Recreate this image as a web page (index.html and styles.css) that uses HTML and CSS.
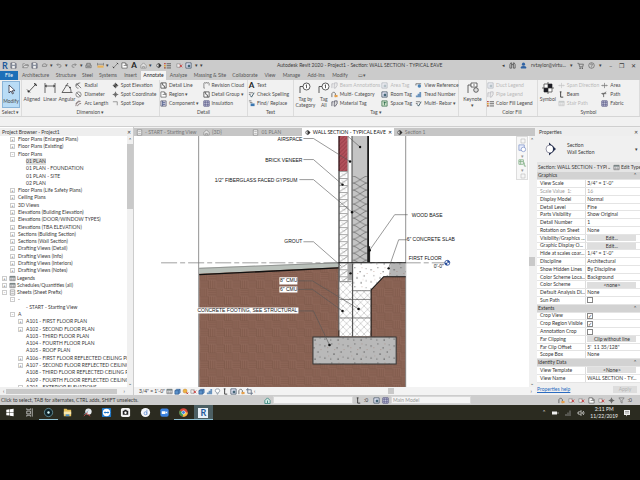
FILE: index.html
```
<!DOCTYPE html>
<html lang="en">
<head>
<meta charset="utf-8">
<title>Autodesk Revit 2020 - Project1</title>
<link rel="stylesheet" href="styles.css">
</head>
<body>
<svg class="sprite" aria-hidden="true">
  <symbol id="i-open" viewBox="0 0 8 8"><path d="M1 6.500V2h2l1 1h3v1M1 6.500 2.500 4h5L6 6.500z" fill="#ddd" stroke="#666" stroke-width=".6"/></symbol>
  <symbol id="i-save" viewBox="0 0 8 8"><path d="M1 1h5l1 1v5H1z" fill="#8d96a3" stroke="#556" stroke-width=".7"/><path d="M2.500 1h3v2h-3zM2.500 4.500h3V7h-3z" fill="#eee"/></symbol>
  <symbol id="i-page" viewBox="0 0 8 8"><path d="M1.500 1h5v6h-5z" fill="#fff" stroke="#777" stroke-width=".7"/><path d="M2.500 3h3M2.500 5h3" stroke="#777" stroke-width=".6"/></symbol>
  <symbol id="i-sync" viewBox="0 0 8 8"><path d="M1.500 5a2.500 2.500 0 0 1 5-1M6.500 4l-1-.7M6.500 4l.8-1M1.500 5h5" fill="none" stroke="#777" stroke-width=".8"/></symbol>
  <symbol id="i-undo" viewBox="0 0 8 8"><path d="M1 3h4a2 2 0 0 1 0 3H3M2.500 1.500 1 3l1.500 1.500" fill="none" stroke="#777" stroke-width=".8"/></symbol>
  <symbol id="i-print" viewBox="0 0 8 8"><path d="M1 3.500h6v3H1z" fill="#ccc" stroke="#555" stroke-width=".7"/><path d="M2 3.500v-2h4v2M2 5h4" fill="none" stroke="#555" stroke-width=".7"/></symbol>
  <symbol id="i-measure" viewBox="0 0 8 8"><path d="M.5 4h7v2.500h-7z" fill="#e8b25a"/><path d="M.5 2.500h7M.5 1v3M7.500 1v3" stroke="#666" stroke-width=".7"/></symbol>
  <symbol id="i-align" viewBox="0 0 12 12"><path d="M2.500 10 9.500 2.500M1 7.500l3 3M8 1l3 3" fill="none" stroke="#444" stroke-width=".9"/><circle cx="2.500" cy="9.500" r="1" fill="#333"/><circle cx="9.500" cy="2.500" r="1" fill="#333"/></symbol>
  <symbol id="i-linear" viewBox="0 0 12 12"><path d="M1 1v10M11 1v10M1 4h10M3 3 1 4l2 1M9 3l2 1-2 1" fill="none" stroke="#444" stroke-width=".8"/></symbol>
  <symbol id="i-angular" viewBox="0 0 12 12"><path d="M1 10.500h10.500M1 10.500 7 1M4.500 3.500C8 3 10 6 10 10" fill="none" stroke="#444" stroke-width=".8"/><circle cx="9" cy="5.500" r=".8" fill="#333"/></symbol>
  <symbol id="i-radial" viewBox="0 0 8 8"><path d="M1.500 2C0 5 2 7.500 4 7M2 2l5 5M2 2h2.500M2 2v2.500M3.500 1.500 6 1" fill="none" stroke="#555" stroke-width=".8"/></symbol>
  <symbol id="i-diam" viewBox="0 0 8 8"><circle cx="4" cy="4" r="3" fill="none" stroke="#555" stroke-width=".7"/><path d="m2 2 4 4" stroke="#555" stroke-width=".8"/></symbol>
  <symbol id="i-arc" viewBox="0 0 8 8"><path d="M1 7c0-3 2-5 5.500-5.500M1 4.500C2 2.500 3 1.500 5 1M3 7c0-2 2-3 4-3" fill="none" stroke="#655" stroke-width=".8"/></symbol>
  <symbol id="i-spot" viewBox="0 0 8 8"><circle cx="4" cy="4" r="2" fill="#eee" stroke="#222" stroke-width=".7"/><path d="M4 2a2 2 0 0 1 2 2H4zM4 6a2 2 0 0 1-2-2h2z" fill="#222"/><path d="M4 .8v6.400M.8 4h6.400" stroke="#444" stroke-width=".6"/></symbol>
  <symbol id="i-coord" viewBox="0 0 8 8"><circle cx="4" cy="4" r="1.700" fill="none" stroke="#555" stroke-width=".8"/><path d="M4 .8v6.400M.8 4h6.400" stroke="#555" stroke-width=".8"/></symbol>
  <symbol id="i-slope" viewBox="0 0 8 8"><path d="M1 2h5v4" fill="none" stroke="#777" stroke-width=".8"/></symbol>
  <symbol id="i-detail" viewBox="0 0 8 8"><path d="M1 1h6v6H1z" fill="#fff" stroke="#444" stroke-width=".9"/><path d="m2 1.500 4 5M3 1v3M5 4v3" stroke="#444" stroke-width=".7"/></symbol>
  <symbol id="i-region" viewBox="0 0 8 8"><path d="M1 1h4l2 2v4H1z" fill="#fff" stroke="#555" stroke-width=".8"/><path d="M3 4h4M5 1v2h2" fill="none" stroke="#555" stroke-width=".7"/></symbol>
  <symbol id="i-comp" viewBox="0 0 8 8"><path d="M1 1h6v6H1z" fill="#dde" stroke="#556" stroke-width=".8"/><path d="M3 1v6M3 3h3M3 5h3" stroke="#347" stroke-width=".8"/></symbol>
  <symbol id="i-cloud" viewBox="0 0 8 8"><path d="M2 7H1V2a1 1 0 0 1 2-.5 1 1 0 0 1 2 0 1 1 0 0 1 2 .5v2" fill="none" stroke="#666" stroke-width=".8"/></symbol>
  <symbol id="i-spell" viewBox="0 0 8 8"><path d="M1 2h5M1 4h2" stroke="#555" stroke-width=".8"/><path d="m2.500 5 1.500 2 3-5" fill="none" stroke="#356" stroke-width="1"/></symbol>
  <symbol id="i-find" viewBox="0 0 8 8"><path d="M1 1h3M2 3h3" stroke="#555" stroke-width=".8"/><path d="M3 4h4.500v3H3z" fill="#3a77b0"/></symbol>
  <symbol id="i-tag" viewBox="0 0 12 12"><circle cx="7.500" cy="4.500" r="3.500" fill="#fff" stroke="#333" stroke-width=".8"/><path d="M1 11V4.500h3M7.500 2.800v3.400M6.800 3.300l.7-.5" fill="none" stroke="#333" stroke-width=".8"/></symbol>
  <symbol id="i-multi" viewBox="0 0 8 8"><path d="M1 7V3l2-2 2 2v4" fill="none" stroke="#444" stroke-width=".8"/><path d="M4 4.500h3.500V7H4z" fill="#e6a04b"/></symbol>
  <symbol id="i-mat" viewBox="0 0 8 8"><path d="M1 7V2h2M4 1h3v3L5 7H3.500z" fill="#ddd" stroke="#445" stroke-width=".8"/></symbol>
  <symbol id="i-room" viewBox="0 0 8 8"><path d="M1 1h6v6H1z" fill="#eef" stroke="#456" stroke-width=".9"/><path d="M3 3h3v3H3z" fill="#467"/></symbol>
  <symbol id="i-space" viewBox="0 0 8 8"><path d="M1 1h6v6H1z" fill="#cfe3cc" stroke="#475" stroke-width=".9"/><path d="M4 2v4M3 3h3" stroke="#264" stroke-width=".8"/></symbol>
  <symbol id="i-view" viewBox="0 0 8 8"><path d="M1 2h6M1 2v2" stroke="#555" stroke-width=".8"/><circle cx="5" cy="4.500" r="2" fill="#4d83b5"/></symbol>
  <symbol id="i-tread" viewBox="0 0 8 8"><path d="M1 7V5h2V3h2V1h2v6z" fill="#6a93bd"/></symbol>
  <symbol id="i-key" viewBox="0 0 12 12"><path d="M1 11V3h3" fill="none" stroke="#444" stroke-width=".8"/><path d="M4 1h6v4H4z" fill="#fff" stroke="#444" stroke-width=".8"/><circle cx="9" cy="8" r="2.300" fill="#ddd" stroke="#444" stroke-width=".8"/><path d="M7 2v2" stroke="#444" stroke-width=".7"/></symbol>
  <symbol id="i-legend" viewBox="0 0 8 8"><path d="M0 1h2v1.500H0z" fill="#c0504d"/><path d="M0 3.500h2V5H0z" fill="#e0a030"/><path d="M0 6h2v1.500H0z" fill="#a05030"/><path d="M3 2h5M3 4.300h5M3 6.800h5" stroke="#444" stroke-width=".9"/></symbol>
  <symbol id="i-symbol" viewBox="0 0 12 12"><path d="M2 2h8v8H2z" fill="#fff" stroke="#333" stroke-width=".7"/><path d="M6 2h4v4H6zM2 6h4v4H2z" fill="#1c1c24"/><path d="M6 0v12M0 6h12" stroke="#333" stroke-width=".7"/></symbol>
  <symbol id="i-span" viewBox="0 0 8 8"><path d="M1 4h6M4 1v6M2 3 1 4l1 1M6 3l1 1-1 1" fill="none" stroke="#777" stroke-width=".8"/></symbol>
  <symbol id="i-beam" viewBox="0 0 8 8"><path d="M3 1v6h3M2 1h2" fill="none" stroke="#333" stroke-width="1"/></symbol>
  <symbol id="i-path" viewBox="0 0 8 8"><path d="M1 3h5M6 1 3 3v4M2 2 1 3l1 1" fill="none" stroke="#555" stroke-width=".9"/></symbol>
  <symbol id="i-fabric" viewBox="0 0 8 8"><path d="M1 1h6v6H1z" fill="#e8eaf6" stroke="#447" stroke-width=".9"/><path d="M3 1v6M5 1v6M1 3h6M1 5h6" stroke="#447" stroke-width=".6"/></symbol>
  <symbol id="i-user" viewBox="0 0 8 8"><circle cx="4" cy="2.500" r="1.800" fill="#2f62a3"/><path d="M1 7.500V6q0-1.500 3-1.500T7 6v1.500z" fill="#2f62a3"/></symbol>
  <symbol id="i-cart" viewBox="0 0 8 8"><path d="M.5 1.500H2L3 5.500h3.500l.8-3H2.200" fill="none" stroke="#555" stroke-width=".8"/><circle cx="3.500" cy="7" r=".6"/><circle cx="6" cy="7" r=".6"/></symbol>
  <symbol id="i-help" viewBox="0 0 8 8"><circle cx="4" cy="4" r="3.200" fill="none" stroke="#555" stroke-width=".7"/><path d="M3 3.200q0-1 1-1t1 1T4 4.500v.4M4 5.500v.6" fill="none" stroke="#555" stroke-width=".7"/></symbol>
  <symbol id="i-bino" viewBox="0 0 8 8"><path d="M1 7V3l1-2h1v6zM7 7V3L6 1H5v6zM3 3h2" fill="none" stroke="#444" stroke-width=".8"/></symbol>
  <symbol id="i-cube" viewBox="0 0 8 8"><path d="m1 3 2-1.500h4V5.500L5 7H1z" fill="#5d93cb" stroke="#2a558a" stroke-width=".7"/><path d="M1 3h4v4M5 3l2-1.500" fill="none" stroke="#2a558a" stroke-width=".6"/></symbol>
  <symbol id="i-grid" viewBox="0 0 8 8"><path d="M1 1.500h6v5H1z" fill="#e7e7ea" stroke="#666" stroke-width=".7"/><path d="M1 1.500h6v1.400H1z" fill="#677"/><path d="M3 3v3.500M5 3v3.500M1 5h6" stroke="#888" stroke-width=".5"/></symbol>
  <symbol id="i-sun" viewBox="0 0 8 8"><circle cx="3.500" cy="3.500" r="2.300" fill="#f0b340" stroke="#b87a20" stroke-width=".5"/><path d="m5 5 2 2M7 5 5 7" stroke="#c0392b" stroke-width="1"/></symbol>
  <symbol id="i-crop" viewBox="0 0 8 8"><path d="M2 0v6h6M0 2h6v6" fill="none" stroke="#5a6a80" stroke-width=".9"/></symbol>
  <symbol id="i-filter" viewBox="0 0 8 8"><path d="M1 1h6L4.700 4v3l-1.400-1V4z" fill="none" stroke="#777" stroke-width=".8"/></symbol>
  <symbol id="i-bulb" viewBox="0 0 8 8"><path d="M4 1a2 2 0 0 0-1 4v1h2V5a2 2 0 0 0-1-4M3.300 7h1.400" fill="#fff" stroke="#678" stroke-width=".7"/></symbol>
  <symbol id="i-home" viewBox="0 0 8 8"><path d="M1 4 4 1l3 3v3.500H1z" fill="#d8eee8" stroke="#2d8077" stroke-width=".9"/><path d="M4 4v3" stroke="#2d8077"/></symbol>
  <symbol id="i-house" viewBox="0 0 8 8"><path d="M1 4 4 1l3 3v3H1zM3 7V5h2v2" fill="#e4e4e4" stroke="#888" stroke-width=".8"/></symbol>
  <symbol id="i-pin" viewBox="0 0 8 8"><path d="M1 2h4v4H1z" fill="#eee" stroke="#777" stroke-width=".6"/><path d="m4 3 3 3M7 3 4 6" stroke="#c33" stroke-width="1"/></symbol>
  <symbol id="i-section" viewBox="0 0 8 8"><circle cx="4" cy="4" r="2" fill="#fff" stroke="#333" stroke-width=".8"/><path d="M4 1v6l3.500-3z" fill="#333"/></symbol>
</svg>

<div class="app">
  <header class="title">
    <div class="quick">
      <b class="logo">R</b>
      <svg class="ic"><use href="#i-save"/></svg><i></i>
      <svg class="ic"><use href="#i-open"/></svg>
      <svg class="ic"><use href="#i-save"/></svg>
      <svg class="ic"><use href="#i-sync"/></svg><i>▾</i>
      <svg class="ic"><use href="#i-undo"/></svg><i>▾</i>
      <svg class="ic flip"><use href="#i-undo"/></svg><i>▾</i>
      <svg class="ic"><use href="#i-print"/></svg><i></i>
      <svg class="ic"><use href="#i-measure"/></svg><i>▾</i>
      <svg class="ic"><use href="#i-align"/></svg>
      <svg class="ic"><use href="#i-region"/></svg>
      <b class="bigA">A</b>
      <svg class="ic"><use href="#i-house"/></svg><i>▾</i>
      <svg class="ic"><use href="#i-section"/></svg>
      <svg class="ic"><use href="#i-legend"/></svg><i></i>
      <svg class="ic"><use href="#i-pin"/></svg>
      <svg class="ic"><use href="#i-room"/></svg><i>▾</i>
      <i>▾</i>
    </div>
    <h1>Autodesk Revit 2020 - Project1 - Section: WALL SECTION - TYPICAL EAVE</h1>
    <div class="account">
      <i>◂</i>
      <svg class="ic"><use href="#i-bino"/></svg>
      <svg class="ic"><use href="#i-user"/></svg>
      <span>rvtaylor@virtu...</span><i>▾</i>
      <svg class="ic"><use href="#i-cart"/></svg>
      <svg class="ic"><use href="#i-help"/></svg><i>▾</i>
    </div>
    <div class="wins"><button aria-label="Minimize">–</button><button aria-label="Restore">❐</button><button aria-label="Close">✕</button></div>
  </header>

  <nav class="tabs">
    <button class="file">File</button><button>Architecture</button><button>Structure</button><button>Steel</button><button>Systems</button><button>Insert</button><button class="on">Annotate</button><button>Analyze</button><button>Massing &amp; Site</button><button>Collaborate</button><button>View</button><button>Manage</button><button>Add-Ins</button><button>Modify</button><button>▭▾</button>
  </nav>

  <section class="ribbon">
    <div class="panel p-select">
      <div class="tools"><button class="big active"><svg><path d="M4 1v8l2-2 1.500 3 1-.6L7.200 6.700H10z" fill="#fff" stroke="#334" stroke-width=".8"/></svg>Modify</button></div>
      <h2>Select ▾</h2>
    </div>
    <div class="panel p-dim">
      <div class="tools">
        <button class="big"><svg><use href="#i-align"/></svg>Aligned</button>
        <button class="big"><svg><use href="#i-linear"/></svg>Linear</button>
        <button class="big"><svg><use href="#i-angular"/></svg>Angular</button>
        <div class="col">
          <button><svg class="ic"><use href="#i-radial"/></svg>Radial</button>
          <button><svg class="ic"><use href="#i-diam"/></svg>Diameter</button>
          <button><svg class="ic"><use href="#i-arc"/></svg>Arc Length</button>
        </div>
        <div class="col">
          <button><svg class="ic"><use href="#i-spot"/></svg>Spot Elevation</button>
          <button><svg class="ic"><use href="#i-coord"/></svg>Spot Coordinate</button>
          <button><svg class="ic"><use href="#i-slope"/></svg>Spot Slope</button>
        </div>
      </div>
      <h2>Dimension ▾</h2>
    </div>
    <div class="panel p-detail">
      <div class="tools">
        <div class="col">
          <button><svg class="ic"><use href="#i-detail"/></svg>Detail Line</button>
          <button><svg class="ic"><use href="#i-region"/></svg>Region ▾</button>
          <button><svg class="ic"><use href="#i-comp"/></svg>Component ▾</button>
        </div>
        <div class="col">
          <button><svg class="ic"><use href="#i-cloud"/></svg>Revision Cloud</button>
          <button><svg class="ic"><use href="#i-detail"/></svg>Detail Group ▾</button>
          <button><svg class="ic"><use href="#i-fabric"/></svg>Insulation</button>
        </div>
      </div>
      <h2>Detail</h2>
    </div>
    <div class="panel p-text">
      <div class="tools">
        <div class="col">
          <button><b class="bigA">A</b>Text</button>
          <button><svg class="ic"><use href="#i-spell"/></svg>Check Spelling</button>
          <button><svg class="ic"><use href="#i-find"/></svg>Find/ Replace</button>
        </div>
      </div>
      <h2>Text</h2>
    </div>
    <div class="panel p-tag">
      <div class="tools">
        <button class="big"><svg><use href="#i-tag"/></svg>Tag by<br>Category</button>
        <button class="big"><svg><use href="#i-tag"/></svg>Tag<br>All</button>
        <div class="col">
          <button disabled><svg class="ic"><use href="#i-mat"/></svg>Beam Annotations</button>
          <button><svg class="ic"><use href="#i-multi"/></svg>Multi- Category</button>
          <button><svg class="ic"><use href="#i-mat"/></svg>Material Tag</button>
        </div>
        <div class="col">
          <button disabled><svg class="ic"><use href="#i-room"/></svg>Area Tag</button>
          <button><svg class="ic"><use href="#i-room"/></svg>Room Tag</button>
          <button><svg class="ic"><use href="#i-space"/></svg>Space Tag</button>
        </div>
        <div class="col">
          <button><svg class="ic"><use href="#i-view"/></svg>View Reference</button>
          <button><svg class="ic"><use href="#i-tread"/></svg>Tread Number</button>
          <button><svg class="ic"><use href="#i-spell"/></svg>Multi- Rebar ▾</button>
        </div>
      </div>
      <h2>Tag ▾</h2>
    </div>
    <div class="panel p-key">
      <div class="tools"><button class="big"><svg><use href="#i-key"/></svg>Keynote<br>▾</button></div>
      <h2></h2>
    </div>
    <div class="panel p-fill">
      <div class="tools">
        <div class="col">
          <button disabled><svg class="ic"><use href="#i-room"/></svg>Duct Legend</button>
          <button disabled><svg class="ic"><use href="#i-mat"/></svg>Pipe Legend</button>
          <button><svg class="ic"><use href="#i-legend"/></svg>Color Fill Legend</button>
        </div>
      </div>
      <h2>Color Fill</h2>
    </div>
    <div class="panel p-sym">
      <div class="tools">
        <button class="big"><svg><use href="#i-symbol"/></svg>Symbol</button>
        <div class="col">
          <button disabled><svg class="ic"><use href="#i-span"/></svg>Span Direction</button>
          <button><svg class="ic"><use href="#i-beam"/></svg>Beam</button>
          <button disabled><svg class="ic"><use href="#i-grid"/></svg>Stair Path</button>
        </div>
        <div class="col">
          <button><svg class="ic"><use href="#i-span"/></svg>Area</button>
          <button><svg class="ic"><use href="#i-path"/></svg>Path</button>
          <button><svg class="ic"><use href="#i-fabric"/></svg>Fabric</button>
        </div>
      </div>
      <h2>Symbol</h2>
    </div>
  </section>
  <div class="options"></div>

  <main class="work">
    <aside class="browser">
      <div class="cap"><span>Project Browser - Project1</span><button aria-label="Close browser">✕</button></div>
      <div class="scroller">
        <ul class="tree">
          <li class="l1 x">Floor Plans (Enlarged Plans)</li>
          <li class="l1 x">Floor Plans (Existing)</li>
          <li class="l1 o">Floor Plans</li>
          <li class="l2"><span class="sel">01 PLAN</span></li>
          <li class="l2">01 PLAN - FOUNDATION</li>
          <li class="l2">01 PLAN - SITE</li>
          <li class="l2">02 PLAN</li>
          <li class="l1 x">Floor Plans (Life Safety Plans)</li>
          <li class="l1 x">Ceiling Plans</li>
          <li class="l1 x">3D Views</li>
          <li class="l1 x">Elevations (Building Elevation)</li>
          <li class="l1 x">Elevations (DOOR/WINDOW TYPES)</li>
          <li class="l1 x">Elevations (TBA ELEVATION)</li>
          <li class="l1 x">Sections (Building Section)</li>
          <li class="l1 x">Sections (Wall Section)</li>
          <li class="l1 x">Drafting Views (Detail)</li>
          <li class="l1 x">Drafting Views (Info)</li>
          <li class="l1 x">Drafting Views (Interiors)</li>
          <li class="l1 x">Drafting Views (Notes)</li>
          <li class="l0 x"><svg class="ic"><use href="#i-grid"/></svg>Legends</li>
          <li class="l0 x"><svg class="ic"><use href="#i-grid"/></svg>Schedules/Quantities (all)</li>
          <li class="l0 o"><svg class="ic"><use href="#i-page"/></svg>Sheets (Sheet Prefix)</li>
          <li class="l1 o">-</li>
          <li class="l2">- START - Starting View</li>
          <li class="l1 o">A</li>
          <li class="l2 x">A101 - FIRST FLOOR PLAN</li>
          <li class="l2 x">A102 - SECOND FLOOR PLAN</li>
          <li class="l2">A103 - THIRD FLOOR PLAN</li>
          <li class="l2">A104 - FOURTH FLOOR PLAN</li>
          <li class="l2">A105 - ROOF PLAN</li>
          <li class="l2 x">A106 - FIRST FLOOR REFLECTED CEILING PLAN</li>
          <li class="l2 x">A107 - SECOND FLOOR REFLECTED CEILING PLAN</li>
          <li class="l2">A108 - THIRD FLOOR REFLECTED CEILING PLAN</li>
          <li class="l2">A109 - FOURTH FLOOR REFLECTED CEILING PLAN</li>
          <li class="l2 x">A201 - EXTERIOR ELEVATIONS</li>
        </ul>
        <div class="vbar"><span>⌃</span><div class="thumb t-tree"></div><span>⌄</span></div>
      </div>
      <div class="hbar"><span>‹</span><div class="thumb"></div><span>›</span></div>
    </aside>

    <section class="doc">
      <nav class="views">
        <button><svg class="ic"><use href="#i-page"/></svg>- START - Starting View</button>
        <button><svg class="ic"><use href="#i-house"/></svg>{3D}</button>
        <button><svg class="ic"><use href="#i-page"/></svg>01 PLAN</button>
        <button class="on"><svg class="ic"><use href="#i-section"/></svg>WALL SECTION - TYPICAL EAVE<span>✕</span></button>
        <button><svg class="ic"><use href="#i-section"/></svg>Section 1</button>
      </nav>
      <div class="canvas">
        <svg class="drawing" viewBox="134 136 394 251" preserveAspectRatio="xMinYMin slice" role="img" aria-label="Wall section">
          <defs>
            <pattern id="earth" width="16" height="16" patternUnits="userSpaceOnUse">
              <rect width="16" height="16" fill="#90685a"/>
              <path d="M0 .5h8M0 2.500h8M0 4.500h8M0 6.500h8M8 8.500h8M8 10.500h8M8 12.500h8M8 14.500h8M8.500 0v8M10.500 0v8M12.500 0v8M14.500 0v8M.5 8v8M2.500 8v8M4.500 8v8M6.500 8v8" stroke="#6f4b3c" stroke-width=".5"/>
            </pattern>
            <pattern id="brick" width="4" height="4" patternUnits="userSpaceOnUse">
              <rect width="4" height="4" fill="#b0505a"/><path d="m0 4 4-4" stroke="#8c343f" stroke-width=".7"/>
            </pattern>
            <pattern id="course" x="339" y="171" width="9" height="7" patternUnits="userSpaceOnUse">
              <rect width="9" height="7" fill="#fff"/><path d="M0 .5h9M0 6.500l9-6" fill="none" stroke="#666" stroke-width=".6"/><path d="m2 2 4 3" stroke="#aaa" stroke-width=".4"/>
            </pattern>
            <pattern id="batt" x="352" y="176" width="15" height="7" patternUnits="userSpaceOnUse">
              <rect width="15" height="7" fill="#c4c4c4"/><path d="M0 0c5 0 10 7 15 7M15 0C10 0 5 7 0 7" fill="none" stroke="#666" stroke-width=".7"/>
            </pattern>
            <pattern id="cmu" x="339" y="281" width="7" height="7" patternUnits="userSpaceOnUse">
              <rect width="7" height="7" fill="#fff"/><path d="m0 0 7 7M7 0 0 7" stroke="#aaa" stroke-width=".5"/>
            </pattern>
            <pattern id="speck" width="23" height="19" patternUnits="userSpaceOnUse">
              <path d="M2 3h1v1H2zM9 1h.8v.8H9zM14 5h1v1h-1zM5 9h.8v.8H5zM11 11h1v1h-1zM18 9h1v1h-1zM20 2h.7v.7H20zM2 15h1v1H2zM8 16h.8v.8H8zM15 16h1v1h-1zM20 14h.8v.8H20z" fill="#333"/>
              <path d="M5 5h.6v.6H5zM12 7h.6v.6h-.6zM17 13h.6v.6h-.6zM6 13h.6v.6H6zM21 7h.6v.6h-.6zM16 1h.6v.6h-.6z" fill="#965"/>
            </pattern>
          </defs>
          <path d="M199 273 338 266V387H405V276H383L370 290V387H199z" fill="url(#earth)"/>
          <path d="M337 330h40v57h-40z" fill="url(#earth)"/>
          <path d="M199 267.500 338 262v5L199 273.500z" fill="#b9c0ba"/>
          <path d="M199 268 338 262.500" stroke="#777" stroke-width=".6"/>
          <path d="M199 274.300 338 267.500" stroke="#111" stroke-width="1.400"/>
          <path d="M198.500 136V387M405 136V387" stroke="#777" stroke-width=".8"/>
          <path d="M161 262.500H446" stroke="#777" stroke-width=".7" stroke-dasharray="16 3 5 3"/>
          <path d="M338 136h9v35h-9z" fill="url(#brick)"/>
          <path d="M339 171h8v110h-8z" fill="url(#course)"/>
          <path d="M338.500 136V336" stroke="#111" stroke-width="1"/>
          <path d="M347.500 136V281" stroke="#555" stroke-width=".6"/>
          <path d="M352 136h15v40h-15z" fill="#c4c4c4"/>
          <path d="M352 176h15v86h-15z" fill="url(#batt)"/>
          <path d="M351.500 136V262" stroke="#333" stroke-width="1"/>
          <path d="M367.500 136V262" stroke="#000" stroke-width="1.600"/>
          <path d="M347.500 263h4v17h-4z" fill="#aaa"/>
          <path d="M352 263h53v13H383L370 290H352z" fill="#fff"/>
          <path d="M390 263h15v13H388z" fill="#b5b5b5"/>
          <path d="M352 263h53v13H383L370 290H352z" fill="url(#speck)"/>
          <path d="M338 262.500H405M405 276.300H383L370.500 289.500" fill="none" stroke="#111" stroke-width="1"/>
          <path d="M339 281h13v55h-13zM352 290h18v46h-18z" fill="url(#cmu)"/>
          <path d="M339 281.300h12M339 299h31M339 317.500h31M352 290.300h18" stroke="#555" stroke-width=".7"/>
          <path d="M352 263V336" stroke="#555" stroke-width="1.200"/>
          <path d="M370.500 289V336" stroke="#111"/>
          <path d="M312.500 336.500h83v27h-83z" fill="#b9b9b9"/>
          <path d="M312.500 336.500h83v27h-83z" fill="url(#speck)" stroke="#333" stroke-width="1"/>
          <path d="M369 246v16" stroke="#111" stroke-width="1"/>
          <g fill="none" stroke="#555" stroke-width=".6">
            <path d="M303 138.500h10L349.500 161.500M347 136l12.500 11M303 159.500h10L342 184.500M299 179.500h14L351.500 212M303 241.500h10L341 266M407 214.500h-13L369 250M406 239.500h-8L388 268"/>
            <path d="M298 280.500h14L358 308.500M298 289h14L342 310.500M298 310.500h15L329 344.500"/>
          </g>
          <g fill="#111">
            <circle cx="359.500" cy="147" r="1.200"/><circle cx="349.500" cy="161.500" r="1.200"/><circle cx="342" cy="184.500" r="1.200"/><circle cx="351.500" cy="212" r="1.200"/><circle cx="369" cy="250" r="1.400"/><circle cx="388" cy="268" r="1.200"/><circle cx="350" cy="273" r="1.200"/><circle cx="358" cy="308.500" r="1.300"/><circle cx="342" cy="310.500" r="1.300"/><circle cx="329" cy="344.500" r="1.300"/>
          </g>
          <path d="M279 277h18v7h-18zM279 286h18v6h-18zM196 307h102v6H196z" fill="#fff"/>
          <g class="note">
            <text x="302" y="141" text-anchor="end">AIRSPACE</text>
            <text x="302" y="162" text-anchor="end">BRICK VENEER</text>
            <text x="297" y="182" text-anchor="end">1/2" FIBERGLASS FACED GYPSUM</text>
            <text x="302" y="243" text-anchor="end">GROUT</text>
            <text x="297" y="282" text-anchor="end">8" CMU</text>
            <text x="297" y="291" text-anchor="end">6" CMU</text>
            <text x="297" y="312" text-anchor="end">CONCRETE FOOTING, SEE STRUCTURAL</text>
            <text x="411" y="217">WOOD BASE</text>
            <text x="406" y="241">6" CONCRETE SLAB</text>
            <text x="408" y="260">FIRST FLOOR</text>
            <text x="433" y="268">0'-0"</text>
          </g>
          <circle cx="446.500" cy="262.500" r="2.500" fill="#fff" stroke="#234a9a" stroke-width=".8"/>
          <path d="M446.500 262.500V260a2.500 2.500 0 0 1 2.500 2.500zM446.500 262.500V265a2.500 2.500 0 0 1-2.500-2.500z" fill="#234a9a"/>
        </svg>
        <div class="navbar">
          <svg class="ic"><path d="M2 2h4v4H2z" fill="none" stroke="#bbb" stroke-width=".6"/></svg>
          <svg class="wheel" viewBox="0 0 10 10"><path d="M1 1h6v6H1z" fill="#e9eefc" stroke="#7d92c9" stroke-width=".8"/><circle cx="6" cy="6" r="2.500" fill="#fff" stroke="#7d92c9" stroke-width=".8"/></svg><i>▾</i>
          <svg class="wheel" viewBox="0 0 10 10"><path d="M1 2h5v5H1zM3 2v5M1 4h5M7 5v4h2" fill="none" stroke="#7fae84" stroke-width=".9"/></svg><i>▾</i>
          <svg class="ic"><path d="M2 2h4v4H2z" fill="none" stroke="#bbb" stroke-width=".6"/></svg>
        </div>
      </div>
      <div class="vbar"><span>⌃</span><div class="thumb t-doc"></div><span>⌄</span></div>
      <div class="viewbar">
        <span class="scale">3/4" = 1'-0"</span>
        <svg class="ic"><use href="#i-grid"/></svg><svg class="ic"><use href="#i-cube"/></svg><svg class="ic"><use href="#i-sun"/></svg><svg class="ic"><use href="#i-pin"/></svg><svg class="ic"><use href="#i-cube"/></svg><svg class="ic"><use href="#i-tread"/></svg><svg class="ic"><use href="#i-bulb"/></svg><svg class="ic"><use href="#i-beam"/></svg><svg class="ic"><use href="#i-room"/></svg><svg class="ic"><use href="#i-multi"/></svg><svg class="ic"><use href="#i-crop"/></svg>
        <span>‹</span><div class="track"><div class="thumb"></div></div><span>›</span>
      </div>
    </section>

    <aside class="props">
      <div class="cap"><span>Properties</span><button aria-label="Close properties">✕</button></div>
      <div class="type">
        <svg viewBox="0 0 16 16"><circle cx="7" cy="8" r="4" fill="#fff" stroke="#99a" stroke-width="1"/><path d="M6 1.500 13 8l-7 6.500V12a4 4 0 0 0 0-8z" fill="#26304f"/></svg>
        <div>Section<br>Wall Section</div><i>▾</i>
      </div>
      <div class="inst">
        <select aria-label="Instance"><option>Section: WALL SECTION - TYPICAL EAVE</option></select><i>⌄</i>
        <button><svg class="ic"><use href="#i-grid"/></svg>Edit Type</button>
      </div>
      <div class="scroller">
        <table>
          <tr class="g"><th colspan="2">Graphics<i>⌃</i></th></tr>
          <tr><td>View Scale</td><td>3/4" = 1'-0"</td></tr>
          <tr class="dim"><td>Scale Value&nbsp; 1:</td><td>16</td></tr>
          <tr><td>Display Model</td><td>Normal</td></tr>
          <tr><td>Detail Level</td><td>Fine</td></tr>
          <tr><td>Parts Visibility</td><td>Show Original</td></tr>
          <tr><td>Detail Number</td><td>1</td></tr>
          <tr><td>Rotation on Sheet</td><td>None</td></tr>
          <tr><td>Visibility/Graphics ...</td><td><button>Edit...</button></td></tr>
          <tr><td>Graphic Display O...</td><td><button>Edit...</button></td></tr>
          <tr><td>Hide at scales coar...</td><td>1/4" = 1'-0"</td></tr>
          <tr><td>Discipline</td><td>Architectural</td></tr>
          <tr><td>Show Hidden Lines</td><td>By Discipline</td></tr>
          <tr><td>Color Scheme Loca...</td><td>Background</td></tr>
          <tr><td>Color Scheme</td><td><button>&lt;none&gt;</button></td></tr>
          <tr><td>Default Analysis Di...</td><td>None</td></tr>
          <tr><td><label for="sun">Sun Path</label></td><td><input type="checkbox" id="sun"></td></tr>
          <tr class="g"><th colspan="2">Extents<i>⌃</i></th></tr>
          <tr><td><label for="cv">Crop View</label></td><td><input type="checkbox" id="cv" checked></td></tr>
          <tr><td><label for="cr">Crop Region Visible</label></td><td><input type="checkbox" id="cr" checked></td></tr>
          <tr><td><label for="ac">Annotation Crop</label></td><td><input type="checkbox" id="ac"></td></tr>
          <tr><td>Far Clipping</td><td><button>Clip without line</button></td></tr>
          <tr><td>Far Clip Offset</td><td>5'&nbsp; 11 35/128"</td></tr>
          <tr><td>Scope Box</td><td>None</td></tr>
          <tr class="g"><th colspan="2">Identity Data<i>⌃</i></th></tr>
          <tr><td>View Template</td><td><button>&lt;None&gt;</button></td></tr>
          <tr><td>View Name</td><td>WALL SECTION - TY...</td></tr>
        </table>
        <div class="vbar"><span>⌃</span><div class="thumb t-props"></div><span>⌄</span></div>
      </div>
      <div class="foot"><a href="#help">Properties help</a><button disabled>Apply</button></div>
    </aside>
  </main>

  <footer class="status">
    <span class="msg">Click to select, TAB for alternates, CTRL adds, SHIFT unselects.</span>
    <svg class="ic"><use href="#i-home"/></svg>
    <select aria-label="Workset"><option></option></select>
    <span class="pair"><svg class="ic"><use href="#i-beam"/></svg>:0</span>
    <span class="pair"><svg class="ic"><use href="#i-room"/></svg><svg class="ic"><use href="#i-fabric"/></svg></span>
    <select aria-label="Design option"><option>Main Model</option></select>
    <span class="right"><svg class="ic"><use href="#i-multi"/></svg><svg class="ic"><use href="#i-pin"/></svg><svg class="ic"><use href="#i-pin"/></svg><svg class="ic"><use href="#i-region"/></svg><svg class="ic"><use href="#i-pin"/></svg><svg class="ic"><use href="#i-coord"/></svg><svg class="ic"><use href="#i-filter"/></svg>:0</span>
  </footer>

  <div class="taskbar">
    <div class="apps">
      <button aria-label="Start"><svg viewBox="0 0 12 12"><path d="M2.500 3 6 2.500v3.200H2.500zM6.500 2.400l4-.5v3.800h-4zM2.500 6.200H6v3.200l-3.500-.5zM6.500 6.200h4V10l-4-.5z" fill="#fff"/></svg></button>
      <button aria-label="Task view"><svg viewBox="0 0 12 12"><path d="M3 4.500h4v3H3zM3 1.500v1.500h4V1.500M3 10.500V9h4v1.500M9 1.500v9" fill="none" stroke="#ddd" stroke-width=".8"/></svg></button>
      <button class="run" aria-label="Recorder"><svg viewBox="0 0 12 12"><circle cx="6" cy="6" r="4.500" fill="#10252b" stroke="#7fb6c4" stroke-width=".7"/><circle cx="6" cy="6" r="1.300" fill="#dff"/></svg></button>
      <button aria-label="Files"><svg viewBox="0 0 12 12"><path d="M2 2h3l1 1h4v7H2z" fill="#e8c25c"/><path d="M2 5h8v3H2z" fill="#f7e7b0"/><path d="M4 8h4v2H4z" fill="#4b8fc9"/></svg></button>
      <button aria-label="Snip"><svg viewBox="0 0 12 12"><circle cx="7" cy="5" r="3.500" fill="#e8ecef"/><path d="m2 10 4-4M5 7l4 3" stroke="#b44" stroke-width="1"/><path d="M2 8 7 4" stroke="#79a" stroke-width=".8"/></svg></button>
      <button aria-label="TeamViewer"><svg viewBox="0 0 12 12"><rect x="1" y="1" width="10" height="10" rx="1" fill="#1f78c8"/><circle cx="6" cy="6" r="4" fill="#fff"/><path d="m2.800 6 2-1.400v.9h2.400v-.9l2 1.400-2 1.400v-.9H4.800v.9z" fill="#1f78c8"/></svg></button>
      <button aria-label="Camera"><svg viewBox="0 0 12 12"><rect x="1" y="1" width="10" height="10" rx="2" fill="#f3f3f3"/><path d="M3 4h1.500l.5-1h2l.5 1H9v4.500H3z" fill="#222"/><circle cx="6" cy="6.200" r="1.300" fill="#fff"/></svg></button>
      <button aria-label="Assistant"><svg viewBox="0 0 12 12"><circle cx="6" cy="6" r="5" fill="#f4f6fa"/><path d="M7.500 3v5.500M7.500 6.500a1.500 1.500 0 1 0-3 .5 1.500 1.500 0 0 0 3 0" fill="none" stroke="#6a8fd0" stroke-width=".9"/></svg></button>
      <button aria-label="Zoom"><svg viewBox="0 0 12 12"><rect x="1.500" y="1.500" width="9" height="9" rx="2" fill="#3b82e0"/><path d="M3 4.500h4v3H3zM7.300 5.700 9 4.700v2.600l-1.700-1z" fill="#fff"/></svg></button>
      <button class="run" aria-label="Chrome"><svg viewBox="0 0 12 12"><circle cx="6" cy="6" r="4.700" fill="#d94a3c"/><path d="M6 6 1.900 3.700A4.700 4.700 0 0 0 5.300 10.600z" fill="#3f9a55"/><path d="M6 6h4.700A4.700 4.700 0 0 1 5.300 10.600z" fill="#f0c040"/><circle cx="6" cy="6" r="2.200" fill="#fff"/><circle cx="6" cy="6" r="1.600" fill="#4080d8"/></svg></button>
      <button class="run cur" aria-label="Revit"><b>R</b></button>
    </div>
    <div class="tray">
      <span>⌃</span>
      <svg viewBox="0 0 8 8"><path d="M1 2.500h5v3H1zM6.500 3.500h1v1h-1z" fill="#eee"/></svg>
      <svg viewBox="0 0 8 8"><path d="M2 7V5M4 7V3.500M6 7V1.500" stroke="#999" stroke-width=".8"/></svg>
      <svg viewBox="0 0 8 8"><path d="M1 3h1.500L4 1.500v5L2.500 5H1zM5 3q1 1 0 2M6.200 2q1.800 2 0 4" fill="none" stroke="#eee" stroke-width=".7"/></svg>
      <time>2:11 PM<br>11/22/2019</time>
      <svg viewBox="0 0 8 8"><path d="M1 1h6v5H4L3 7.500V6H1z" fill="#eee"/><path d="M2 2.500h4M2 4h4" stroke="#555" stroke-width=".5"/></svg>
    </div>
  </div>
</div>
</body>
</html>
```
FILE: styles.css
```
*, *::before { box-sizing: border-box; margin: 0; padding: 0; }
body { background: #000; color: #3a3a3a; font: 5px/7px "Liberation Sans Narrow", Lato, "Open Sans", sans-serif; }
button, select, input { font: inherit; color: inherit; background: none; border: 0; border-radius: 0; }
button { white-space: nowrap; }
i { font-style: normal; }
.sprite { display: none; }
.ic { width: 7px; height: 7px; flex: none; }
.app { display: flex; flex-direction: column; height: 100vh; padding: 60px 0; }

.title { display: grid; grid-template-columns: 277fr 223fr 109fr 31fr; align-items: center; height: 11px; background: #cbcbcb; }
.title h1 { font-size: 5px; font-weight: 400; white-space: nowrap; }
.quick, .account { display: flex; align-items: center; gap: 4px; padding-left: 2px; }
.quick { justify-content: space-between; padding-right: 74px; gap: 0; }
.logo { color: #1f5a9c; font-size: 9px; }
.bigA { font-size: 8px; width: 7px; text-align: center; color: #222; }
.flip { transform: scaleX(-1); }
.wins { display: flex; justify-content: space-between; padding-right: 4px; font-size: 6px; }

.tabs, .ribbon { font-family: Lato, "Open Sans", sans-serif; }
.tabs { display: grid; grid-template-columns: 18fr 35fr 26fr 17fr 24fr 21fr 25fr 25fr 38fr 32fr 18fr 25fr 24fr 24fr 19fr 269fr; height: 9px; background: #cbcbcb; }
.tabs button { line-height: 9px; color: #555; }
.tabs .file { background: #1c6fb8; color: #fff; }
.tabs .on { background: #f4f4f4; color: #222; }

.ribbon { display: grid; grid-template-columns: 22fr 138fr 88fr 46fr 165fr 28fr 51fr 102fr; height: 37px; background: #f1f1f1; border-bottom: 1px solid #d5d5d5; color: #4c4c4c; }
.panel { display: flex; flex-direction: column; border-right: 1px solid #dcdcdc; }
.panel h2 { font-size: 5px; font-weight: 400; text-align: center; line-height: 8px; height: 8px; }
.tools { display: grid; flex: 1; min-height: 0; }
.p-select .tools { padding: 1px 1px 0 2px; }
.p-dim .tools { grid-template-columns: 20fr 17fr 16fr 37fr 48fr; }
.p-detail .tools { grid-template-columns: 43fr 45fr; }
.p-tag .tools { grid-template-columns: 23fr 14fr 51fr 34fr 43fr; }
.p-sym .tools { grid-template-columns: 20fr 44fr 38fr; }
.col { display: grid; grid-template-rows: repeat(3, 9px); align-content: center; min-width: 0; }
.col button { display: flex; align-items: center; gap: 2px; }
.big { display: flex; flex-direction: column; align-items: center; line-height: 6px; padding-top: 2px; }
.big svg { width: 12px; height: 12px; flex: none; margin-bottom: 2px; }
.active { background: #b9dcf6; border: 1px solid #8ab4d8; }
button:disabled { opacity: .35; }
.options { height: 10px; background: #f1f1f1; border-bottom: 1px solid #cfcfcf; }

.work { display: grid; grid-template-columns: 134px 1fr 105px; flex: 1; min-height: 0; background: #f0f0f0; }
.cap { display: flex; justify-content: space-between; align-items: center; height: 8px; padding: 0 2px; background: #eee; }
.scroller { display: flex; flex: 1; min-height: 0; overflow: hidden; }
.vbar { display: flex; flex-direction: column; justify-content: space-between; align-items: center; width: 6px; flex: none; background: #f0f0f0; }
.thumb { background: #c9c9c9; }
.vbar .thumb { width: 6px; }
.vbar span { line-height: 8px; }

.browser { display: flex; flex-direction: column; min-height: 0; background: #fff; border-right: 1px solid #ccc; }
.tree { flex: 1; min-width: 0; height: 255px; display: grid; grid-template: repeat(35, 1fr) / minmax(0, 1fr); list-style: none; overflow: hidden; }
.tree li { display: flex; align-items: center; white-space: nowrap; min-height: 0; overflow: hidden; }
.tree li::before { content: ""; width: 5px; height: 5px; margin-right: 3px; flex: none; font-size: 4px; line-height: 3px; text-align: center; }
.tree .x::before { content: "+"; border: 1px solid #ccc; }
.tree .o::before { content: "-"; border: 1px solid #ccc; }
.tree .l0 { padding-left: 2px; }
.tree .l0::before { margin-right: 2px; }
.tree .l0 .ic { margin-right: 1px; }
.tree .l1 { padding-left: 10px; }
.tree .l2 { padding-left: 18px; }
.sel { background: #ddd; }
.t-tree { height: 65px; margin-bottom: auto; }
.hbar { display: flex; justify-content: space-between; align-items: center; height: 8px; padding: 0 8px 0 3px; background: #f0f0f0; }
.hbar .thumb { flex: 1; height: 5px; margin: 0 7px 0 2px; }

.doc { display: grid; grid-template: 8px 1fr 8px / 1fr 6px; min-height: 0; }
.doc, .props, .browser { padding-top: 1px; }
.views { grid-column: 1 / 3; display: grid; grid-template-columns: 68fr 50fr 52fr 86fr 143fr; background: #c6c6c6; }
.views button { display: flex; align-items: center; gap: 2px; color: #777; padding-left: 2px; }
.views .on { background: #fff; color: #111; justify-content: space-between; padding-right: 2px; font-family: Lato, "Open Sans", sans-serif; }
.canvas { position: relative; background: #fff; min-width: 0; min-height: 0; overflow: hidden; }
.drawing { display: block; width: 100%; height: 100%; }
.note { font: 5px "Liberation Sans", Arial, sans-serif; fill: #111; }
.navbar { position: absolute; top: 0; right: 1px; width: 12px; height: 44px; display: flex; flex-direction: column; align-items: center; justify-content: space-between; background: #f7f7f7; border: 1px solid #ddd; line-height: 4px; color: #999; }
.navbar .wheel { width: 9px; height: 9px; }
.t-doc { height: 9px; }
.viewbar { grid-column: 1 / 3; display: flex; align-items: center; gap: 1px; padding-right: 3px; background: #f3f3f3; }
.viewbar .scale { width: 31px; padding-left: 5px; white-space: nowrap; }
.track { flex: 1; padding-left: 132px; }
.track .thumb { width: 6px; height: 6px; }

.props { display: flex; flex-direction: column; min-height: 0; padding-left: 2px; }
.type { display: flex; align-items: center; gap: 8px; height: 26px; padding: 0 2px 0 6px; }
.type svg { width: 16px; height: 16px; }
.type i { margin-left: auto; }
.inst { display: grid; grid-template-columns: 1fr 6px 27px; align-items: center; height: 10px; background: #e4e4e4; }
.inst select { min-width: 0; appearance: none; padding-left: 1px; }
.inst button { display: flex; align-items: center; gap: 1px; }
.props .scroller { flex: none; height: 211px; }
.props table { flex: 1; height: 211px; table-layout: fixed; border-collapse: collapse; background: #fff; color: #333; }
.props td, .props th { height: 7px; border-bottom: 1px solid #e4e4e4; line-height: 5px; font-weight: 400; text-align: left; white-space: nowrap; overflow: hidden; padding-left: 3px; }
.props td + td { border-left: 1px solid #ddd; padding: 0 4px 0 1px; }
.props .g th { background: #d2d2d2; padding-left: 1px; }
.g i { float: right; padding-right: 3px; }
.dim { color: #999; }
.props td button { display: block; width: 100%; background: #dedede; line-height: 6px; }
input[type=checkbox] { appearance: none; display: block; width: 6px; height: 6px; border: 1px solid #888; background: #fff; line-height: 4px; text-align: center; }
input:checked::before { content: "✓"; display: block; }
.t-props { height: 146px; margin-bottom: auto; }
.foot { display: flex; justify-content: space-between; align-items: center; flex: 1; padding-right: 3px; }
.foot a { color: #2a6bc0; }
.foot button { background: #bbb; width: 24px; line-height: 7px; }

.status { display: flex; align-items: center; gap: 2px; height: 10px; background: #cdcdcd; }
.status .msg { width: 262px; padding-left: 1px; }
.status select { width: 80px; height: 8px; background: #f4f4f4; border: 1px solid #d8d8d8; color: #999; appearance: none; padding-left: 1px; }
.pair { display: flex; gap: 2px; width: 16px; }
.right { display: flex; gap: 3px; margin: 0 8px 0 auto; }

.taskbar { display: flex; justify-content: space-between; height: 15px; background: #2b2b20; color: #eee; }
.apps { display: grid; grid-template-columns: repeat(11, 1fr); width: 213px; }
.apps button { display: grid; place-items: center; }
.apps svg { width: 11px; height: 11px; }
.run { box-shadow: inset 0 -1px #8fbfd0; }
.apps .cur { background: #4c5f63; }
.cur b { width: 10px; background: #e9f0f7; color: #1f5a9c; font-size: 9px; line-height: 10px; }
.tray { display: flex; align-items: center; gap: 5px; padding-right: 9px; }
.tray svg { width: 8px; height: 8px; }
time { text-align: center; line-height: 7px; }
```
